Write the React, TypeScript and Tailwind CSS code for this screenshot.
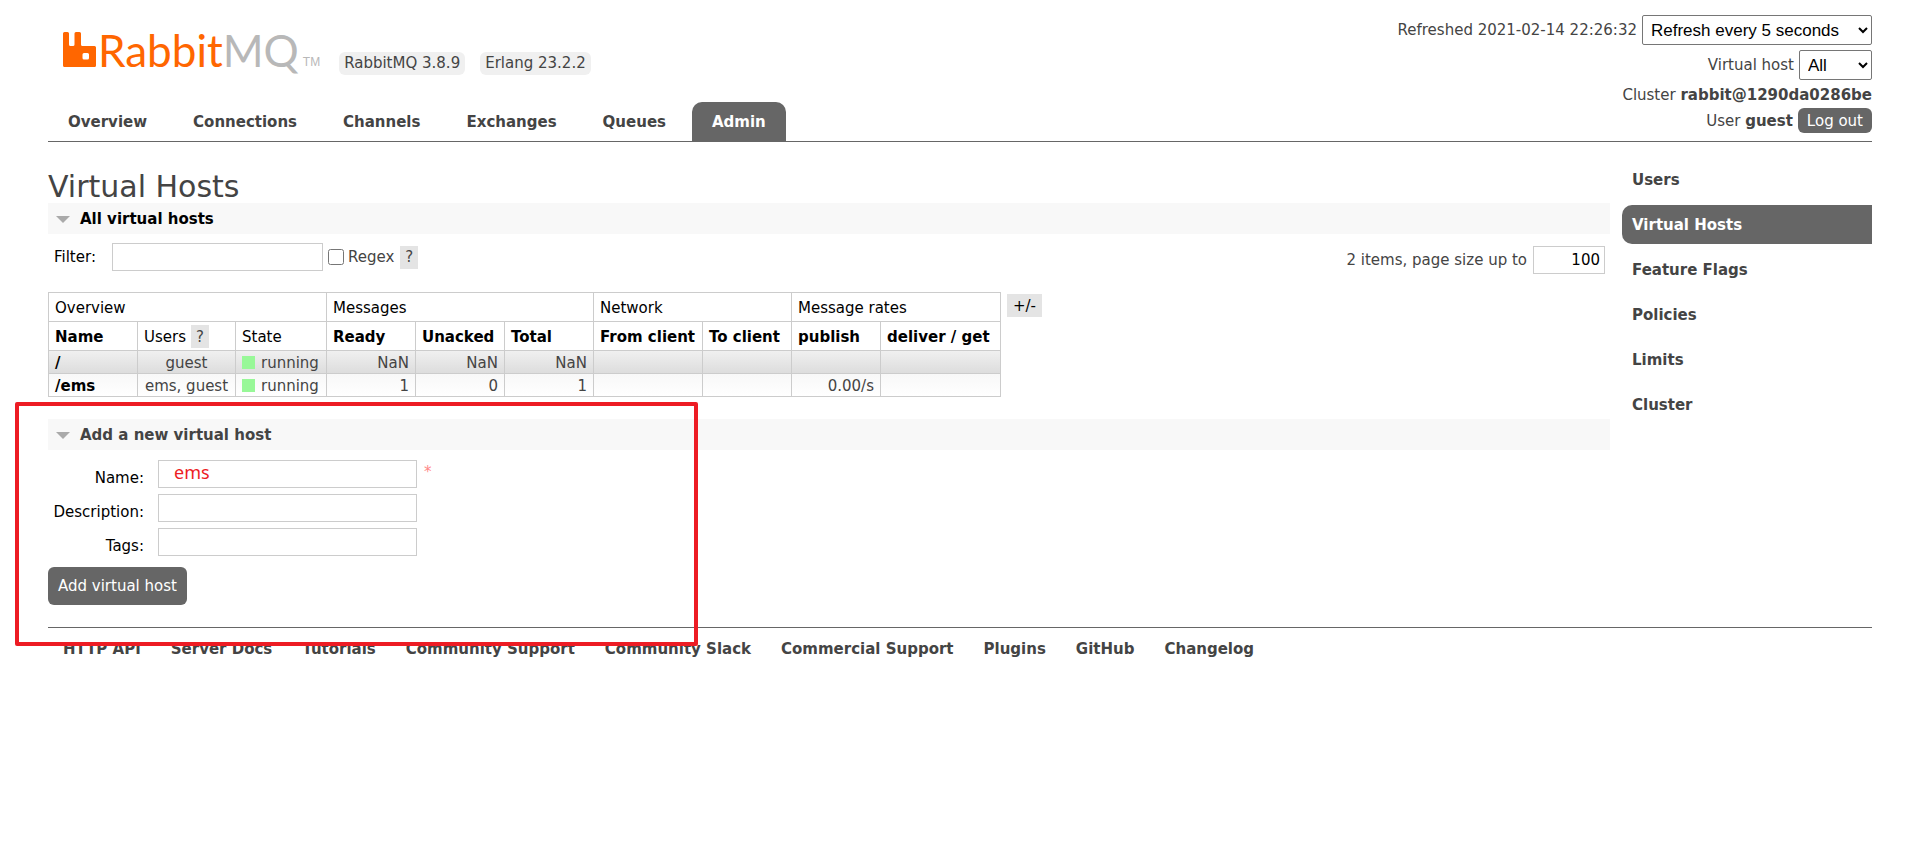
import type { ReactNode } from 'react';

interface VirtualHost {
  name: string;
  users: string;
  state: string;
  ready: string;
  unacked: string;
  total: string;
  publish: string;
}

const tabs = ['Overview', 'Connections', 'Channels', 'Exchanges', 'Queues', 'Admin'];

const adminLinks = ['Users', 'Virtual Hosts', 'Feature Flags', 'Policies', 'Limits', 'Cluster'];

const footerLinks = [
  'HTTP API',
  'Server Docs',
  'Tutorials',
  'Community Support',
  'Community Slack',
  'Commercial Support',
  'Plugins',
  'GitHub',
  'Changelog',
];

const vhosts: VirtualHost[] = [
  { name: '/', users: 'guest', state: 'running', ready: 'NaN', unacked: 'NaN', total: 'NaN', publish: '' },
  { name: '/ems', users: 'ems, guest', state: 'running', ready: '1', unacked: '0', total: '1', publish: '0.00/s' },
];

const inputStyle = 'h-7 border border-[#ccc] bg-white px-1 text-black';

const selectStyle =
  "h-[30px] rounded-[2px] border border-[#767676] bg-white pl-1 font-['Liberation_Sans',sans-serif] text-[17px] text-black";

function Logo() {
  return (
    <a href="#" className="flex items-end" aria-label="RabbitMQ">
      <svg viewBox="0 0 33 35" className="mb-[11px] h-[35px] w-[33px]" fill="#f60">
        <path
          fillRule="evenodd"
          d="M1.5 0H4.500Q6 0 6 1.500V12.500Q6 14 7.500 14H10Q11.500 14 11.500 12.500V1.500Q11.500 0 13 0H16.500Q18 0 18 1.500V12.500Q18 14 19.500 14H31.500Q33 14 33 15.500V33.500Q33 35 31.500 35H1.500Q0 35 0 33.500V1.500Q0 0 1.500 0ZM21 21Q19.500 21 19.500 22.500V26Q19.500 27.500 21 27.500H24.500Q26 27.500 26 26V22.500Q26 21 24.500 21Z"
        />
      </svg>
      <span className="ml-[2px] font-['Lato','Liberation_Sans',sans-serif] text-[44px] leading-[56px] text-[#f60]">
        Rabbit<span className="text-[#b8b8b8]">MQ</span>
      </span>
      <span className="mb-2 ml-1 font-['Liberation_Sans',sans-serif] text-[12px] leading-4 text-[#b8b8b8]">TM</span>
    </a>
  );
}

function HelpButton() {
  return (
    <button className="h-[23px] bg-[#e4e4e4] px-[5px] text-[#444]" aria-label="Help">
      ?
    </button>
  );
}

function SectionHeading({ children, hovered }: { children: ReactNode; hovered?: boolean }) {
  return (
    <h2 className={`flex h-[31px] items-center gap-[10px] bg-[#f8f8f8] pl-2 font-bold ${hovered ? 'text-black' : 'text-[#444]'}`}>
      <svg viewBox="0 0 14 7" className="mt-px h-[7px] w-[14px]" fill="#aaa">
        <path d="M0 0H14L7 7Z" />
      </svg>
      {children}
    </h2>
  );
}

function FormRow({ id, label, value, required }: { id: string; label: string; value?: string; required?: boolean }) {
  return (
    <div className="flex h-7 items-start">
      <label htmlFor={id} className="mt-[7px] w-24 text-right text-black">
        {label}:
      </label>
      <input
        id={id}
        defaultValue={value}
        className="ml-[14px] h-7 w-[259px] border border-[#ccc] bg-white px-[15px] pb-1 font-['Noto_Sans',sans-serif] text-[18px] text-[#ed1c24]"
      />
      {required && <span className="mt-px ml-[7px] text-[#f88]">*</span>}
    </div>
  );
}

function Header() {
  return (
    <header className="flex h-[142px] justify-between border-b border-[#666]">
      <div className="flex flex-col justify-between">
        <div className="flex items-end gap-[15px] pt-[22px] pl-[15px]">
          <Logo />
          <ul className="mb-[3px] ml-1 flex gap-[15px]">
            <li className="h-[23px] rounded-md bg-[#f0f0f0] px-[5px] leading-[23px]">RabbitMQ 3.8.9</li>
            <li className="h-[23px] rounded-md bg-[#f0f0f0] px-[5px] leading-[23px]">Erlang 23.2.2</li>
          </ul>
        </div>
        <nav className="flex gap-[6px]">
          {tabs.map((tab) => (
            <a
              key={tab}
              href="#"
              className={`h-[39px] rounded-t-[10px] px-5 font-bold leading-[41px] ${
                tab === 'Admin' ? 'bg-[#666] text-white' : 'text-[#444]'
              }`}
            >
              {tab}
            </a>
          ))}
        </nav>
      </div>
      <div className="flex flex-col items-end pt-[15px]">
        <div className="flex items-center gap-[5px]">
          <label htmlFor="refresh">Refreshed 2021-02-14 22:26:32</label>
          <select id="refresh" className={`${selectStyle} w-[230px]`}>
            <option>Refresh every 5 seconds</option>
          </select>
        </div>
        <div className="mt-[5px] flex items-center gap-[5px]">
          <label htmlFor="vhost">Virtual host</label>
          <select id="vhost" className={`${selectStyle} w-[73px]`}>
            <option>All</option>
          </select>
        </div>
        <p className="mt-1">
          Cluster <b>rabbit@1290da0286be</b>
        </p>
        <div className="mt-[2px] flex items-center gap-[5px]">
          <p>
            User <b>guest</b>
          </p>
          <button className="h-[25px] rounded-md bg-[#666] px-[9px] text-white">Log out</button>
        </div>
      </div>
    </header>
  );
}

function VhostTable() {
  const th = 'h-[29px] border border-[#ccc] px-[6px] pt-px text-left';
  const td = 'h-[23px] border border-[#ccc] px-[6px] pt-px';

  return (
    <table className="border-collapse leading-5">
      <thead className="text-black">
        <tr>
          <th colSpan={3} className={`${th} font-normal`}>Overview</th>
          <th colSpan={3} className={`${th} font-normal`}>Messages</th>
          <th colSpan={2} className={`${th} font-normal`}>Network</th>
          <th colSpan={2} className={`${th} font-normal`}>Message rates</th>
        </tr>
        <tr>
          <th className={`${th} w-[89px]`}>Name</th>
          <th className={`${th} w-[98px] font-normal`}>
            <span className="flex items-center gap-[5px]">
              Users <HelpButton />
            </span>
          </th>
          <th className={`${th} w-[91px] font-normal`}>State</th>
          <th className={`${th} w-[89px]`}>Ready</th>
          <th className={`${th} w-[89px]`}>Unacked</th>
          <th className={`${th} w-[89px]`}>Total</th>
          <th className={`${th} w-[109px]`}>From client</th>
          <th className={`${th} w-[89px]`}>To client</th>
          <th className={`${th} w-[89px]`}>publish</th>
          <th className={`${th} w-[120px]`}>deliver / get</th>
        </tr>
      </thead>
      <tbody>
        {vhosts.map((vhost, i) => (
          <tr key={vhost.name} className={i % 2 ? 'bg-linear-to-b from-[#f8f8f8] to-white' : 'bg-linear-to-b from-[#f0f0f0] to-[#dcdcdc]'}>
            <td className={`${td} font-bold text-black`}>
              <a href="#">{vhost.name}</a>
            </td>
            <td className={`${td} text-center`}>{vhost.users}</td>
            <td className={td}>
              <span className="flex items-center gap-[6px]">
                <span className="size-[13px] bg-[#98f898]" />
                {vhost.state}
              </span>
            </td>
            <td className={`${td} text-right`}>{vhost.ready}</td>
            <td className={`${td} text-right`}>{vhost.unacked}</td>
            <td className={`${td} text-right`}>{vhost.total}</td>
            <td className={td} />
            <td className={td} />
            <td className={`${td} text-right`}>{vhost.publish}</td>
            <td className={td} />
          </tr>
        ))}
      </tbody>
    </table>
  );
}

export default function App() {
  return (
    <div className="relative min-h-screen bg-white px-12 font-['DejaVu_Sans',Verdana,sans-serif] text-[15px] leading-[22px] text-[#444]">
      <Header />

      <div className="flex items-start gap-3">
        <main className="min-w-0 flex-1 pt-[25px]">
          <h1 className="h-9 text-[30px] leading-10">Virtual Hosts</h1>
          <SectionHeading hovered>All virtual hosts</SectionHeading>

          <div className="flex items-start justify-between pt-[9px] pr-[5px] pl-[6px]">
            <div className="flex items-center">
              <label htmlFor="filter" className="w-[58px] text-black">
                Filter:
              </label>
              <input id="filter" className={`${inputStyle} w-[211px]`} />
              <input id="regex" type="checkbox" className="ml-[5px] size-4" />
              <label htmlFor="regex" className="mr-[6px] ml-1">
                Regex
              </label>
              <HelpButton />
            </div>
            <div className="mt-[3px] flex items-center gap-[6px]">
              <label htmlFor="page-size">2 items, page size up to</label>
              <input id="page-size" defaultValue="100" className={`${inputStyle} w-[72px] text-right`} />
            </div>
          </div>

          <div className="mt-[18px] flex items-start gap-[6px]">
            <VhostTable />
            <button className="mt-[2px] h-[23px] bg-[#e4e4e4] px-[6px] text-black">+/-</button>
          </div>

          <form className="mt-[22px]" onSubmit={(e) => e.preventDefault()}>
            <SectionHeading>Add a new virtual host</SectionHeading>
            <div className="mt-[10px] flex flex-col gap-[6px]">
              <FormRow id="name" label="Name" value="ems" required />
              <FormRow id="description" label="Description" />
              <FormRow id="tags" label="Tags" />
            </div>
            <button type="submit" className="mt-[11px] h-[38px] rounded-md bg-[#666] px-[10px] text-white">
              Add virtual host
            </button>
          </form>
        </main>

        <aside className="flex w-[250px] flex-col gap-[6px] pt-[18px]">
          {adminLinks.map((link) => (
            <a
              key={link}
              href="#"
              className={`h-[39px] rounded-l-[10px] px-[10px] font-bold leading-[41px] ${
                link === 'Virtual Hosts' ? 'bg-[#666] text-white' : ''
              }`}
            >
              {link}
            </a>
          ))}
        </aside>
      </div>

      <footer className="mt-[22px] flex gap-[30px] border-t border-[#666] pt-[10px] pl-[15px] font-bold">
        {footerLinks.map((link) => (
          <a key={link} href="#">
            {link}
          </a>
        ))}
      </footer>

      {/* highlight over the add form */}
      <div className="pointer-events-none absolute top-[402px] left-[15px] h-[244px] w-[683px] rounded-[2px] border-4 border-[#ed1c24]" />
    </div>
  );
}
